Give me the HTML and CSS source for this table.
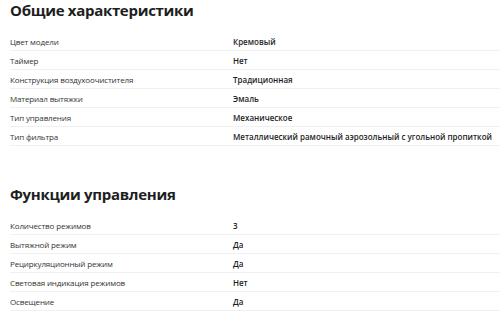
FILE: index.html
```html
<!DOCTYPE html>
<html lang="ru">
<head>
<meta charset="utf-8">
<link rel="stylesheet" href="styles.css">
</head>
<body>
<section class="section">
  <h2 class="title">Общие характеристики</h2>
  <div class="rows">
    <div class="row"><span class="label">Цвет модели</span><span class="value">Кремовый</span></div>
    <div class="row"><span class="label">Таймер</span><span class="value">Нет</span></div>
    <div class="row"><span class="label">Конструкция воздухоочистителя</span><span class="value">Традиционная</span></div>
    <div class="row"><span class="label">Материал вытяжки</span><span class="value">Эмаль</span></div>
    <div class="row"><span class="label">Тип управления</span><span class="value">Механическое</span></div>
    <div class="row"><span class="label">Тип фильтра</span><span class="value">Металлический рамочный аэрозольный с угольной пропиткой</span></div>
  </div>
</section>
<section class="section">
  <h2 class="title">Функции управления</h2>
  <div class="rows">
    <div class="row"><span class="label">Количество режимов</span><span class="value">3</span></div>
    <div class="row"><span class="label">Вытяжной режим</span><span class="value">Да</span></div>
    <div class="row"><span class="label">Рециркуляционный режим</span><span class="value">Да</span></div>
    <div class="row"><span class="label">Световая индикация режимов</span><span class="value">Нет</span></div>
    <div class="row"><span class="label">Освещение</span><span class="value">Да</span></div>
  </div>
</section>
</body>
</html>
```
FILE: styles.css
```css
html, body {
  margin: 0;
  padding: 0;
  background: #fff;
}
body {
  font-family: "Open Sans", "Liberation Sans", sans-serif;
  color: #222;
  padding: 0 0 0 10px;
  overflow: hidden;
}
.section {
  margin-bottom: 38px;
}
.title {
  margin: 0 0 12px 0;
  font-size: 15px;
  line-height: 20px;
  font-weight: 700;
  color: #1e1e1e;
  letter-spacing: -0.3px;
}
.rows {
  display: flex;
  flex-direction: column;
}
.row {
  display: grid;
  grid-template-columns: 223px 1fr;
  height: 18px;
  align-items: center;
  border-bottom: 1px solid #f0f0f0;
  font-size: 8px;
  white-space: nowrap;
}
.label {
  color: #333;
  letter-spacing: -0.15px;
}
.value {
  color: #1e1e1e;
  font-weight: 600;
}
```
